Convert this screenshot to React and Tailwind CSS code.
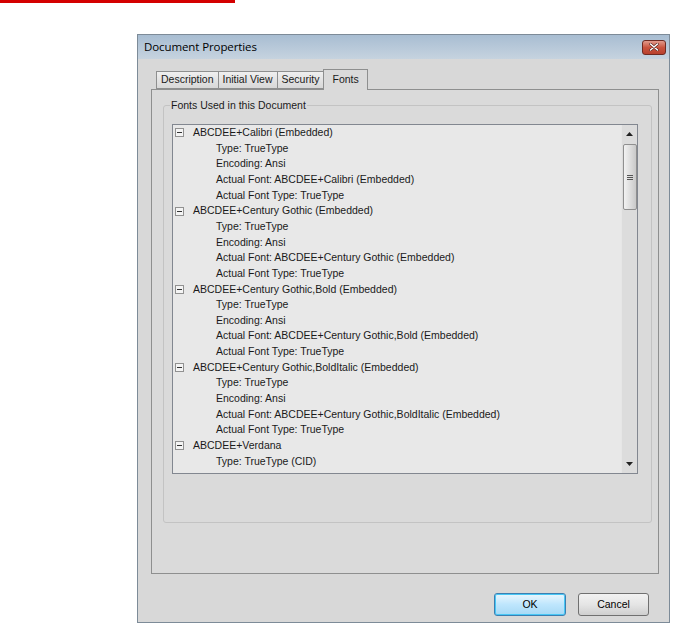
import React from 'react';

const fonts = [
  {
    name: "ABCDEE+Calibri (Embedded)",
    items: ["Type: TrueType", "Encoding: Ansi", "Actual Font: ABCDEE+Calibri (Embedded)", "Actual Font Type: TrueType"],
  },
  {
    name: "ABCDEE+Century Gothic (Embedded)",
    items: ["Type: TrueType", "Encoding: Ansi", "Actual Font: ABCDEE+Century Gothic (Embedded)", "Actual Font Type: TrueType"],
  },
  {
    name: "ABCDEE+Century Gothic,Bold (Embedded)",
    items: ["Type: TrueType", "Encoding: Ansi", "Actual Font: ABCDEE+Century Gothic,Bold (Embedded)", "Actual Font Type: TrueType"],
  },
  {
    name: "ABCDEE+Century Gothic,BoldItalic (Embedded)",
    items: ["Type: TrueType", "Encoding: Ansi", "Actual Font: ABCDEE+Century Gothic,BoldItalic (Embedded)", "Actual Font Type: TrueType"],
  },
  {
    name: "ABCDEE+Verdana",
    items: ["Type: TrueType (CID)"],
  },
];

const tabs = ["Description", "Initial View", "Security", "Fonts"];

const App = () => {
  return (
    <div className="w-[675px] h-[625px] bg-white overflow-hidden font-['Liberation_Sans',sans-serif] text-[10.5px] text-[#1a1a1a]">
      {/* red rule */}
      <div className="w-[235px] h-[3px] bg-[#d40000]" />

      {/* dialog */}
      <div className="ml-[137px] mt-[31px] w-[533px] h-[589px] border border-[#7d8b98] bg-[#d8d8d8] flex flex-col">
        {/* title bar */}
        <div className="h-[24px] flex items-center justify-between pl-[6px] pr-[3px] bg-gradient-to-b from-[#a8bdd2] to-[#c6d3df]">
          <span className="text-[11.5px] text-black font-['Open_Sans',sans-serif] tracking-[-0.1px]">Document Properties</span>
          <div className="w-[24px] h-[15px] rounded-[3px] border border-[#6e2a22] bg-gradient-to-b from-[#e19a8c] via-[#c9543f] to-[#b8402d] flex items-center justify-center">
            <svg width="10" height="8" viewBox="0 0 10 8">
              <path d="M1.5 1 L8.5 7 M8.5 1 L1.5 7" stroke="#4a1a14" strokeWidth="2.6" strokeLinecap="round" />
              <path d="M1.5 1 L8.5 7 M8.5 1 L1.5 7" stroke="#ffffff" strokeWidth="1.6" strokeLinecap="round" />
            </svg>
          </div>
        </div>

        <div className="flex-1 px-[13px] pr-[10px] pt-[10px] flex flex-col">
          {/* tabs */}
          <div className="flex items-end pl-[5px] h-[20px]">
            {tabs.map((t) => {
              const active = t === "Fonts";
              return active ? (
                <div key={t} className="h-[21px] -mb-[1px] px-[8px] border border-[#8e8f8f] border-b-0 bg-[#dadada] relative z-10 flex items-start pt-[2px]">
                  {t}
                </div>
              ) : (
                <div key={t} className="h-[18px] px-[4px] border border-[#8e8f8f] border-r-0 bg-gradient-to-b from-[#efefef] to-[#d8d8d8] flex items-center">
                  {t}
                </div>
              );
            })}
          </div>

          {/* tab panel */}
          <div className="h-[485px] border border-[#8e8f8f] bg-[#dadada] pl-[11px] pr-[6px] pt-[9px]">
            {/* group box */}
            <div className="relative h-[418px] border border-[#c3c3c3] rounded-[3px] mt-[6px] pl-[8px] pr-[13px] pt-[18px]">
              <span className="absolute -top-[8px] left-[6px] px-[1px] bg-[#dadada] leading-[14px]">Fonts Used in this Document</span>

              {/* list box */}
              <div className="h-[350px] border border-[#828790] bg-[#e8e8e8] flex">
                <div className="flex-1 overflow-hidden">
                  {fonts.map((f) => (
                    <div key={f.name}>
                      <div className="h-[15.67px] flex items-center pl-[2px]">
                        <div className="w-[9px] h-[9px] border border-[#919191] bg-[#f4f4f4] flex items-center justify-center mr-[9px]">
                          <div className="w-[5px] h-[1px] bg-[#333]" />
                        </div>
                        <span>{f.name}</span>
                      </div>
                      {f.items.map((it) => (
                        <div key={it} className="h-[15.67px] flex items-center pl-[43px]">
                          {it}
                        </div>
                      ))}
                    </div>
                  ))}
                </div>

                {/* scrollbar */}
                <div className="w-[16px] bg-[#dcdcdc] border-l border-[#e6e6e6] flex flex-col items-center">
                  <div className="h-[18px] w-full flex items-center justify-center">
                    <svg width="7" height="4" viewBox="0 0 7 4"><path d="M3.5 0 L7 4 L0 4 Z" fill="#222" /></svg>
                  </div>
                  <div className="mt-[1px] w-[14px] h-[66px] rounded-[2px] border border-[#8f8f8f] bg-gradient-to-r from-[#f2f2f2] via-[#dedede] to-[#c9c9c9] flex flex-col items-center justify-center gap-[1px]">
                    <div className="w-[6px] h-[1px] bg-[#555]" />
                    <div className="w-[6px] h-[1px] bg-[#555]" />
                    <div className="w-[6px] h-[1px] bg-[#555]" />
                  </div>
                  <div className="flex-1" />
                  <div className="h-[18px] w-full flex items-center justify-center">
                    <svg width="7" height="4" viewBox="0 0 7 4"><path d="M0 0 L7 0 L3.5 4 Z" fill="#222" /></svg>
                  </div>
                </div>
              </div>
            </div>
          </div>

          {/* buttons */}
          <div className="flex justify-end gap-[12px] pr-[10px] mt-[19px]">
            <button className="w-[72px] h-[23px] rounded-[3px] border border-[#3c7fb1] bg-gradient-to-b from-[#eaf6fd] via-[#bee6fd] to-[#a7d9f5] shadow-[inset_0_0_0_1px_#48c7f5] text-[10.5px] text-black">
              OK
            </button>
            <button className="w-[71px] h-[23px] rounded-[3px] border border-[#707070] bg-gradient-to-b from-[#f2f2f2] via-[#e5e5e5] to-[#cfcfcf] text-[10.5px] text-black">
              Cancel
            </button>
          </div>
        </div>
      </div>
    </div>
  );
};

export default App;
